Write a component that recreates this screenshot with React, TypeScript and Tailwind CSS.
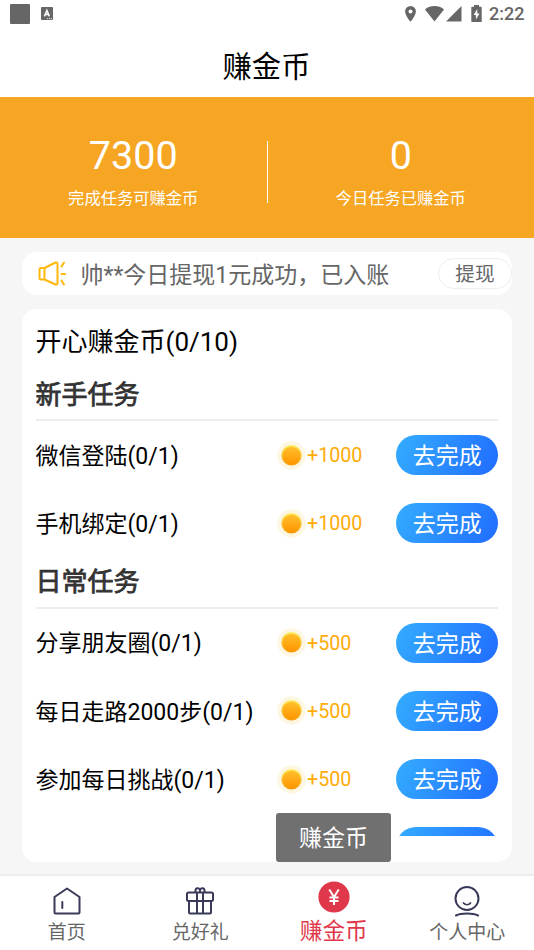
import React from "react";

function StatusBar() {
  return (
    <div className="flex h-[27px] items-center justify-between pl-[10px] pr-[9.500px] text-[#666]">
      <div className="flex items-center gap-[11px]">
        <div className="h-5 w-5 rounded-[1px] bg-[#666]" />
        <svg className="h-[13px] w-3" viewBox="0 0 12 13">
          <rect width="12" height="13" rx="1" fill="#666" />
          <path d="M3.4 9.4 5.9 3.4 8.4 9.4M4.3 7.5h3.2" fill="none" stroke="#fff" strokeWidth="1.5" />
          <path d="M6 11.6h5" stroke="#fff" strokeWidth=".8" strokeDasharray="1.2 .7" />
        </svg>
      </div>
      <div className="flex items-center">
        <svg className="mr-[9px] h-4 w-[11px]" viewBox="0 0 11 16" fill="#666">
          <path fillRule="evenodd" d="M5.5 0A5.4 5.4 0 0 0 .1 5.4C.1 9.3 5.5 15.8 5.5 15.8s5.4-6.500 5.4-10.400A5.400 5.400 0 0 0 5.500 0Zm0 3.500a2 2 0 1 1 0 4 2 2 0 0 1 0-4Z" />
        </svg>
        <svg className="h-4 w-[19px]" viewBox="0 0 19 16" fill="#666">
          <path d="M0 3.400C5.500-1 13.500-1 19 3.400L9.500 15.400Z" />
        </svg>
        <svg className="ml-[2px] h-4 w-4" viewBox="0 0 16 16" fill="#666">
          <path d="M15.500 0v15.500H0Z" />
        </svg>
        <svg className="mr-[7.500px] ml-[9px] h-[17px] w-[11px]" viewBox="0 0 11 17">
          <path d="M3 0h5v1.800h2q.7 0 .7.700v13.700q0 .7-.7.700H1q-.7 0-.7-.7V2.500q0-.7.7-.7h2Z" fill="#666" />
          <path d="M6.300 4 2.600 10h2.300v4.500L8.500 8.500H6.300Z" fill="#fff" />
        </svg>
        <span className="text-[18px] leading-none font-medium">2:22</span>
      </div>
    </div>
  );
}

function Stat({ value, label }: { value: string; label: string }) {
  return (
    <div className="flex flex-1 flex-col items-center text-white">
      <div className="mt-[35px] h-12 text-[39.500px] leading-[48px]">{value}</div>
      <div className="mt-[7px] text-[16.300px] leading-6">{label}</div>
    </div>
  );
}

function Coin() {
  return (
    <svg className="h-[29px] w-[29px]" viewBox="0 0 29 29">
      <defs>
        <linearGradient id="coin-face" x1="0" y1="0" x2="0" y2="1">
          <stop offset="0" stopColor="#ffc02c" />
          <stop offset="1" stopColor="#ff9500" />
        </linearGradient>
        <linearGradient id="coin-rim" x1="0" y1="0" x2="0" y2="1">
          <stop offset="0" stopColor="#fbee61" />
          <stop offset="1" stopColor="#f59d08" />
        </linearGradient>
      </defs>
      <circle cx="14.500" cy="14.500" r="14.200" fill="#fdf6e3" />
      <circle cx="14.500" cy="14.300" r="10.200" fill="url(#coin-rim)" />
      <circle cx="14.500" cy="14.500" r="8.800" fill="url(#coin-face)" />
    </svg>
  );
}

function TaskRow({ name, reward }: { name: string; reward: string }) {
  return (
    <div className="flex h-[68.200px] shrink-0 items-center">
      <div className="w-[241px] pt-[4px] text-[23px] whitespace-nowrap text-black">{name}</div>
      <div className="flex w-[119px] items-center gap-[1.500px] text-[19.700px] text-[#ffab08]">
        <Coin />
        <span className="pt-[2px]">{reward}</span>
      </div>
      <button className="h-10 w-[102.500px] rounded-full bg-linear-[115deg] from-[#34adff] to-[#206cff] pl-px text-[23px] leading-[43px] text-white">
        去完成
      </button>
    </div>
  );
}

function SectionTitle({ children }: { children: React.ReactNode }) {
  return (
    <div className="h-[51.200px] shrink-0 border-b-2 border-[#ededed] text-[26px] leading-[51px] text-[#333] [-webkit-text-stroke:0.8px_#333]">
      {children}
    </div>
  );
}

function NavItem({ label, icon, active = false }: { label: string; icon: React.ReactNode; active?: boolean }) {
  return (
    <div className="flex flex-1 flex-col items-center">
      <div className="flex h-[42px] items-start">{icon}</div>
      <div className={active ? "text-[22.700px] leading-7 text-[#df384b]" : "text-[19px] leading-[30px] text-[#666]"}>
        {label}
      </div>
    </div>
  );
}

const HomeIcon = (
  <svg className="mt-[11px] h-7 w-7" viewBox="0 0 28 28" fill="none" stroke="#39395a" strokeWidth="2" strokeLinejoin="round" strokeLinecap="round">
    <path d="M1.500 10 14 1.500 26.500 10v15.500q0 1-1 1h-23q-1 0-1-1Z" />
    <path d="M9.300 15v6" />
  </svg>
);

const GiftIcon = (
  <svg className="mt-[11px] h-7 w-7" viewBox="0 0 28 28" fill="none" stroke="#39395a" strokeWidth="2" strokeLinejoin="round">
    <rect x="1" y="5.500" width="26" height="8.500" rx="1.500" />
    <path d="M3 14v11.500q0 1 1 1h20q1 0 1-1V14M11 5.500v21M17 5.500v21" />
    <path d="M9.500 5.500V3.500C9.500 .8 13 .5 14 3V5.500M18.500 5.500V3.500C18.500 .8 15 .5 14 3" />
  </svg>
);

const CoinNavIcon = (
  <svg className="mt-[5px] h-8 w-8" viewBox="0 0 32 32">
    <circle cx="16" cy="16" r="15.600" fill="#df384b" />
    <path d="m11.300 8.500 4.700 7.500 4.700-7.500M16 16v8M11.500 16.500h9M11.500 20h9" fill="none" stroke="#fff" strokeWidth="2" />
  </svg>
);

const UserIcon = (
  <svg className="mt-[9.500px] h-[31px] w-[26px]" viewBox="0 0 26 31" fill="none" stroke="#39395a" strokeWidth="2" strokeLinecap="round">
    <circle cx="13" cy="12.500" r="11.500" />
    <path d="M9.500 17c1.800 2.300 5.200 2.300 7 0" strokeWidth="1.700" />
    <path d="M2 29.500c5-2.600 17-2.600 22 0" />
  </svg>
);

export default function App() {
  return (
    <div className="relative flex h-[950px] w-[534px] flex-col overflow-hidden bg-[#f6f6f6] font-[Roboto,'Noto_Sans_CJK_SC',sans-serif]">
      <header className="h-[96.500px] shrink-0 bg-white">
        <StatusBar />
        <h1 className="mt-[17.800px] pr-px text-center text-[29.300px] leading-[44px] text-black">赚金币</h1>
      </header>

      <section className="flex h-[141.500px] shrink-0 bg-[#f6a623]">
        <Stat value="7300" label="完成任务可赚金币" />
        <div className="mt-[44.500px] h-[62px] w-px bg-white" />
        <Stat value="0" label="今日任务已赚金币" />
      </section>

      <section className="ml-[21.500px] mt-[14px] flex h-[43px] w-[490.500px] shrink-0 items-center rounded-[15px] bg-white">
        <svg className="ml-[16px] h-[26px] w-7" viewBox="0 0 28 26" fill="none" stroke="#ffb80c" strokeWidth="2" strokeLinejoin="round" strokeLinecap="round">
          <path d="M6.500 7 17.500 1.500Q19.500 1 19.500 3v19q0 2-2 1.500L6.500 18.500ZM6.500 7H3Q1.500 7 1.500 8.500v8.500Q1.500 18.500 3 18.500h3.500" />
          <path d="m23.500 5.500 2.500-4M23.500 13H27M23.500 19.500l2.500 4" />
        </svg>
        <div className="ml-[15px] flex-1 pt-[5px] text-[23px] whitespace-nowrap text-[#666]">帅**今日提现1元成功，已入账</div>
        <button className="h-[31px] w-[74px] rounded-full border-[1.500px] border-[#eee] text-[19.700px] leading-[31px] text-[#666]">提现</button>
      </section>

      <main className="ml-[21.500px] mt-[14px] flex h-[552.500px] w-[490.500px] shrink-0 flex-col rounded-[15px] bg-white px-[14px]">
        <h2 className="mt-[10px] h-[46px] text-[26px] leading-[47px] text-black">开心赚金币(0/10)</h2>
        <div className="mt-[4.800px] flex h-[466.500px] flex-col overflow-hidden">
          <SectionTitle>新手任务</SectionTitle>
          <TaskRow name="微信登陆(0/1)" reward="+1000" />
          <TaskRow name="手机绑定(0/1)" reward="+1000" />
          <SectionTitle>日常任务</SectionTitle>
          <TaskRow name="分享朋友圈(0/1)" reward="+500" />
          <TaskRow name="每日走路2000步(0/1)" reward="+500" />
          <TaskRow name="参加每日挑战(0/1)" reward="+500" />
          <div className="mt-[14px] ml-[360px] h-10 w-[102.500px] shrink-0 rounded-full bg-linear-[115deg] from-[#34adff] to-[#206cff]" />
        </div>
      </main>

      <nav className="mt-[12.500px] flex flex-1 border-t-2 border-[#ededed] bg-white">
        <NavItem label="首页" icon={HomeIcon} />
        <NavItem label="兑好礼" icon={GiftIcon} />
        <NavItem label="赚金币" icon={CoinNavIcon} active />
        <NavItem label="个人中心" icon={UserIcon} />
      </nav>

      <div className="absolute top-[813px] left-[276px] h-[49px] w-[115px] rounded-[3px] bg-[#707070] text-center text-[23px] leading-[51px] text-white">
        赚金币
      </div>
    </div>
  );
}
